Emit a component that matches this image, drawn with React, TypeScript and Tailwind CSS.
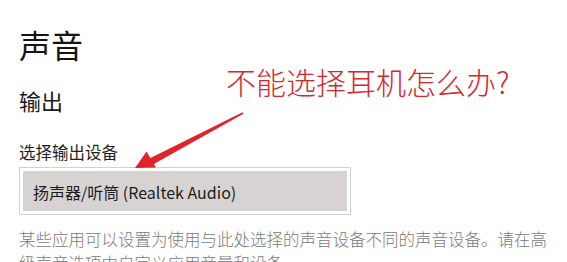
const cjk = { fontFamily: '"Noto Sans CJK SC", "Noto Sans", sans-serif' };

function Arrow() {
  // tail (243,113) -> tip (135,168)
  return (
    <svg className="absolute left-0 top-0" width="567" height="262" viewBox="0 0 567 262">
      <polygon
        points="243.4,113.7 242.6,112.3 149.4,158.6 152.6,164.8"
        fill="#e0242a"
      />
      <polygon points="135,168 146.5,151.5 156,167.5" fill="#e0242a" />
    </svg>
  );
}

export default function App() {
  return (
    <div className="relative w-[567px] h-[262px] overflow-hidden bg-white" style={cjk}>
      <div className="pl-[19px] pt-[24px]">
        <h1 className="text-[32px] leading-[40px] text-[#151515] font-normal">声音</h1>
        <h2 className="mt-[21px] text-[22px] leading-[30px] text-[#1a1a1a] font-normal">输出</h2>
        <div className="mt-[26px] text-[16.5px] leading-[22px] text-[#1f1f1f]">选择输出设备</div>
        <div className="mt-[4px] w-[332px] h-[48px] border border-[#d2d0d0] p-[3px]">
          <div className="h-full bg-[#d8d3d3] flex items-center pl-[10px] pt-[1px] text-[16px] text-[#1c1c1c]">
            扬声器/听筒 (Realtek Audio)
          </div>
        </div>
        <p className="mt-[12px] w-[540px] text-[16.5px] leading-[24px] text-[#7a7a7a] font-light">
          某些应用可以设置为使用与此处选择的声音设备不同的声音设备。请在高级声音选项中自定义应用音量和设备。
        </p>
      </div>
      <div className="absolute left-[226px] top-[63px] text-[30px] leading-[36px] text-[#d8262a] font-light whitespace-nowrap">
        不能选择耳机怎么办?
      </div>
      <Arrow />
    </div>
  );
}
